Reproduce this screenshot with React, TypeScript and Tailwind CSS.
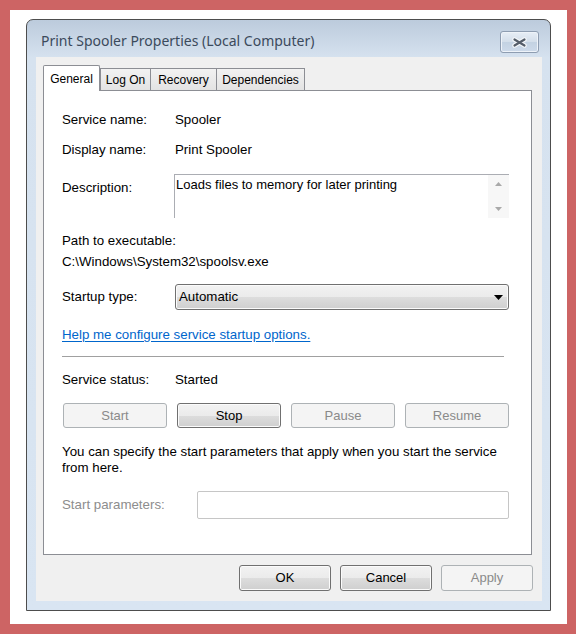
import type { ReactNode } from 'react';

function WinButton({ children, disabled }: { children: ReactNode; disabled?: boolean }) {
  return (
    <button
      className={
        disabled
          ? "h-full w-full rounded-[3px] border border-[#adb2b5] bg-[#f4f4f4] text-[13px] text-[#8a8a8a]"
          : "h-full w-full rounded-[3px] border border-[#707070] bg-[linear-gradient(#f2f2f2_0%,#ebebeb_50%,#dddddd_50%,#cfcfcf_100%)] text-[13px] text-black shadow-[inset_0_0_0_1px_#fbfbfb]"
      }
    >
      {children}
    </button>
  );
}

const tabBase =
  "flex h-[22px] items-center justify-center border border-b-0 border-[#8c8e94] bg-[linear-gradient(#f2f2f2,#e3e3e3)] text-[12px] text-black";

export default function App() {
  return (
    <div className="min-h-[634px] bg-[#cd6464] pl-[10px] pr-[9px] py-[10px] font-['Liberation_Sans',Arial,sans-serif]">
      <div className="bg-white px-4 pt-[9px] pb-[13px]">
        {/* window frame */}
        <div className="rounded-t-[7px] border border-[#4d4d4d] bg-[linear-gradient(#bccbdc_0px,#d6e2ef_38px,#d9e5f2_100%)]">
          {/* title bar */}
          <div className="flex h-[37px] items-start justify-between pl-[14px] pr-[11px]">
            <span className="mt-[13px] font-['Noto_Sans',sans-serif] text-[14px] leading-4 text-[#3b4a5c]">
              Print Spooler Properties (Local Computer)
            </span>
            <div className="mt-[11px] flex h-[22px] w-[39px] items-center justify-center rounded-[3px] border border-[#8e9db1] bg-[linear-gradient(#e7eef6,#d3deea_50%,#c3d2e2_50%,#cddaea)] shadow-[inset_0_0_0_1px_#eef3f9]">
              <svg width="15" height="11" viewBox="0 0 15 11">
                <path d="M2.5 2.5 L12.5 8.5 M12.5 2.5 L2.5 8.5" stroke="#f4f7fa" strokeWidth="4.4" strokeLinecap="round" />
                <path d="M2.5 2.5 L12.5 8.5 M12.5 2.5 L2.5 8.5" stroke="#545d69" strokeWidth="2.2" strokeLinecap="round" />
              </svg>
            </div>
          </div>

          {/* gray client area */}
          <div className="ml-[9px] mr-[8px] mb-[9px] bg-[#f0f0f0] pt-2 pb-[10px] pl-[7px] pr-[10px]">
            {/* tabs */}
            <div className="flex h-[25px] items-end">
              <div className="relative z-10 -mb-px flex h-[26px] w-[57px] items-start justify-center rounded-t-[2px] border border-b-0 border-[#8c8e94] bg-white pt-[4px] text-[12px] text-black">
                General
              </div>
              <div className={tabBase + " w-[51px]"}>Log On</div>
              <div className={tabBase + " w-[66px] border-l-0"}>Recovery</div>
              <div className={tabBase + " w-[88px] border-l-0"}>Dependencies</div>
            </div>

            {/* tab page */}
            <div className="h-[465px] border border-[#8c8e94] bg-white pl-[18px] pr-[22px] pt-[21px] text-[13.3px] text-black">
              <div className="flex h-4 items-center leading-4">
                <span className="w-[113px]">Service name:</span>
                <span>Spooler</span>
              </div>
              <div className="mt-[14px] flex h-4 items-center leading-4">
                <span className="w-[113px]">Display name:</span>
                <span>Print Spooler</span>
              </div>

              <div className="mt-4 flex items-start">
                <span className="w-[112px] pt-[6px] leading-4">Description:</span>
                <div className="flex h-[44px] flex-1 border-l border-t border-[#abadb3]">
                  <div className="flex-1 pl-[1px] pt-[2px] text-[13px] leading-4">Loads files to memory for later printing</div>
                  <div className="flex w-[21px] flex-col items-center justify-between bg-[#f7f7f7] py-[7px]">
                    <svg width="7" height="4" viewBox="0 0 7 4">
                      <path d="M0 4 L3.5 0 L7 4 Z" fill="#a9a9a9" />
                    </svg>
                    <svg width="7" height="4" viewBox="0 0 7 4">
                      <path d="M0 0 L7 0 L3.5 4 Z" fill="#a9a9a9" />
                    </svg>
                  </div>
                </div>
              </div>

              <div className="mt-[15px] leading-4">Path to executable:</div>
              <div className="mt-[5px] leading-4">C:\Windows\System32\spoolsv.exe</div>

              <div className="mt-[14px] flex h-[26px] items-center">
                <span className="w-[113px]">Startup type:</span>
                <div className="flex h-full flex-1 items-center justify-between rounded-[3px] border border-[#707070] bg-[linear-gradient(#f2f2f2_0%,#ebebeb_50%,#dddddd_50%,#cfcfcf_100%)] pl-[3px] pr-[5px] shadow-[inset_0_0_0_1px_#fbfbfb]">
                  <span>Automatic</span>
                  <svg width="9" height="5" viewBox="0 0 9 5">
                    <path d="M0 0 L9 0 L4.5 5 Z" fill="#000" />
                  </svg>
                </div>
              </div>

              <div className="mt-[17px] leading-4">
                <a className="text-[#0066cc] underline underline-offset-2">Help me configure service startup options.</a>
              </div>

              <div className="mt-[13px] mr-[5px] border-t border-[#a0a0a0]" />

              <div className="mt-[15px] flex h-4 items-center leading-4">
                <span className="w-[113px]">Service status:</span>
                <span>Started</span>
              </div>

              <div className="ml-px mt-[15px] grid h-[25px] grid-cols-4 gap-[10px]">
                <WinButton disabled>Start</WinButton>
                <WinButton>Stop</WinButton>
                <WinButton disabled>Pause</WinButton>
                <WinButton disabled>Resume</WinButton>
              </div>

              <p className="mt-4 leading-4">
                You can specify the start parameters that apply when you start the service from here.
              </p>

              <div className="mt-[15px] flex h-[28px] items-center">
                <span className="w-[135px] text-[#8d8d8d]">Start parameters:</span>
                <div className="h-full flex-1 rounded-[2px] border border-[#c6c6c6] bg-white" />
              </div>
            </div>

            {/* dialog buttons */}
            <div className="-mr-px mt-[10px] flex h-[26px] justify-end gap-[9px]">
              <div className="w-[92px]">
                <WinButton>OK</WinButton>
              </div>
              <div className="w-[92px]">
                <WinButton>Cancel</WinButton>
              </div>
              <div className="w-[92px]">
                <WinButton disabled>Apply</WinButton>
              </div>
            </div>
          </div>
        </div>
      </div>
    </div>
  );
}
